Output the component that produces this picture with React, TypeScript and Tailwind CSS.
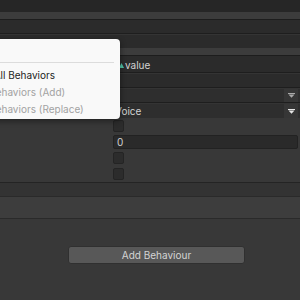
import React from 'react';

const FONT = { fontFamily: 'Inter, "Noto Sans", sans-serif' };

function Sep() {
  return (
    <div className="h-[2px] border-t border-[#1e1e1e] bg-[#343434]" />
  );
}

function DropArrow({ bright }: { bright?: boolean }) {
  return (
    <div className="flex h-full w-[14px] items-center justify-center bg-[#363636]">
      <svg width="7" height="5" viewBox="0 0 7 5">
        <rect x="0" y="0" width="7" height="1" fill={bright ? '#e6e6e6' : '#a8a8a8'} />
        <polygon points="0.5,1.5 6.5,1.5 3.5,4.8" fill={bright ? '#e6e6e6' : '#a8a8a8'} />
      </svg>
    </div>
  );
}

function Checkbox() {
  return <div className="h-[12px] w-[11px] rounded-[2px] border border-[#242424] bg-[#2c2c2c]" />;
}

export default function App() {
  return (
    <div className="relative h-[300px] w-[300px] overflow-hidden bg-[#383838] text-[10px]" style={FONT}>
      {/* header bands */}
      <div className="h-[12px] bg-[#262626]" />
      <div className="h-[7px] bg-[#3c3c3c]" />
      <div className="h-px bg-[#1d1d1d]" />
      <div className="h-[13px] bg-[#2b2b2b]" />
      <Sep />
      <div className="h-[13px] bg-[#2b2b2b]" />
      <div className="h-[7px] bg-[#3c3c3c]" />
      <div className="h-[3px] border-t border-[#1d1d1d] bg-[#2b2b2b]" />

      {/* value row */}
      <div className="flex h-[14px] items-center bg-[#2b2b2b] pl-[119px]">
        <svg width="5" height="5" viewBox="0 0 5 5" className="mr-[1px]">
          <polygon points="2.5,0 5,5 0,5" fill="#4fc3a6" />
        </svg>
        <span className="leading-none text-[#d2d2d2]">value</span>
      </div>
      <Sep />
      <div className="h-[13px] bg-[#2b2b2b]" />
      <Sep />

      {/* dropdowns */}
      <div className="flex h-[13px] bg-[#2e2e2e] pl-[113px] pr-[2px]">
        <div className="flex-1" />
        <DropArrow />
      </div>
      <Sep />
      <div className="flex h-[14px] items-center bg-[#2e2e2e] pl-[115px] pr-[2px]">
        <span className="flex-1 leading-none text-[#d2d2d2]">Voice</span>
        <DropArrow bright />
      </div>

      {/* toggles and number */}
      <div className="flex flex-col pl-[113px] pr-[2px]">
        <div className="flex h-[16px] items-start pt-[2px]">
          <Checkbox />
        </div>
        <div className="flex h-[16px] items-center">
          <div className="flex h-[14px] flex-1 items-center rounded-[2px] border border-[#222] bg-[#2a2a2a] pl-[3px] leading-none text-[#d2d2d2]">
            0
          </div>
        </div>
        <div className="flex h-[16px] items-center">
          <Checkbox />
        </div>
        <div className="flex h-[16px] items-center">
          <Checkbox />
        </div>
      </div>

      <div className="h-px bg-[#242424]" />
      <div className="h-[13px] bg-[#333333]" />
      <div className="h-px bg-[#2a2a2a]" />
      <div className="h-[21px] bg-[#3d3d3d]" />
      <div className="h-px bg-[#2a2a2a]" />

      <div className="pl-[68px] pt-[27px]">
        <button className="flex h-[18px] w-[177px] items-center justify-center rounded-[3px] border border-[#303030] bg-[#585858] text-[10px] leading-none text-[#d4d4d4]">
          Add Behaviour
        </button>
      </div>

      {/* context menu */}
      <div className="absolute left-[-50px] top-[39px] flex h-[80px] w-[170px] flex-col rounded-[4px] bg-[#f9f9f9] text-[10px] shadow-[0_2px_6px_rgba(0,0,0,0.45)]">
        <div className="h-[23px]" />
        <div className="ml-[10px] mr-[6px] h-px bg-[#dcdcdc]" />
        <div className="h-[4px]" />
        <div className="flex h-[17px] items-center pl-[16px] text-[#1c1c1c]">Copy All Behaviors</div>
        <div className="flex h-[17px] items-center pl-[10px] text-[#a2a2a2]">Paste Behaviors (Add)</div>
        <div className="flex h-[17px] items-center pl-[10px] text-[#a2a2a2]">Paste Behaviors (Replace)</div>
      </div>
    </div>
  );
}
